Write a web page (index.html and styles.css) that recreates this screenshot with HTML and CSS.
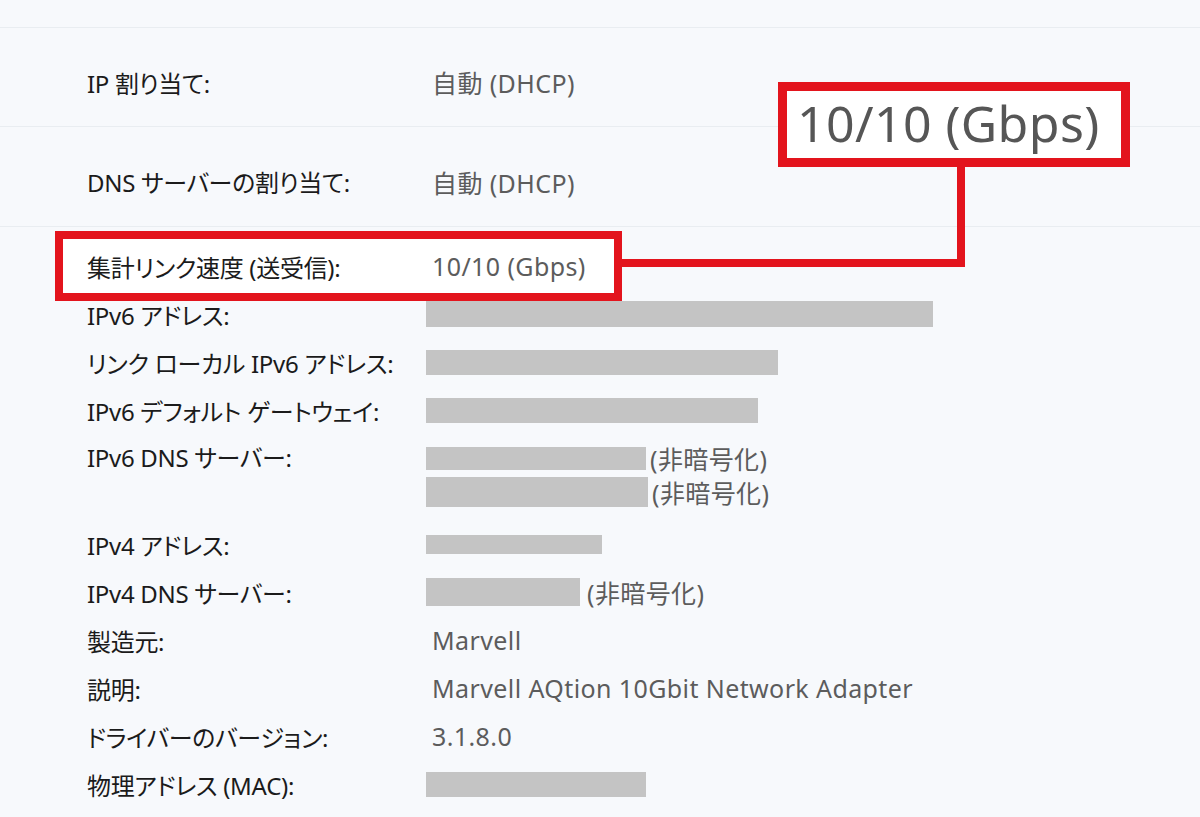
FILE: index.html
```html
<!DOCTYPE html>
<html lang="ja">
<head>
<meta charset="utf-8">
<title>ネットワーク プロパティ</title>
<link rel="stylesheet" href="styles.css">
</head>
<body>
<div class="page">
  <div class="top"></div>
  <div class="row">
    <div class="label">IP 割り当て:</div>
    <div class="value">自動 (DHCP)</div>
  </div>
  <div class="row">
    <div class="label">DNS サーバーの割り当て:</div>
    <div class="value">自動 (DHCP)</div>
  </div>
  <div class="list">
    <div class="item">
      <div class="label">集計リンク速度 (送受信):</div>
      <div class="value">10/10 (Gbps)</div>
    </div>
    <div class="item">
      <div class="label">IPv6 アドレス:</div>
      <div class="value"><span class="mask" style="width:507px;height:26px"></span></div>
    </div>
    <div class="item">
      <div class="label">リンク ローカル IPv6 アドレス:</div>
      <div class="value"><span class="mask" style="width:352px;height:25px"></span></div>
    </div>
    <div class="item">
      <div class="label">IPv6 デフォルト ゲートウェイ:</div>
      <div class="value"><span class="mask" style="width:332px;height:25px"></span></div>
    </div>
    <div class="item multi">
      <div class="label">IPv6 DNS サーバー:</div>
      <div class="value stack">
        <div class="line first"><span class="mask" style="width:220px;height:23px"></span><span class="note">(非暗号化)</span></div>
        <div class="line second"><span class="mask" style="width:222px;height:30px"></span><span class="note">(非暗号化)</span></div>
      </div>
    </div>
    <div class="item">
      <div class="label">IPv4 アドレス:</div>
      <div class="value"><span class="mask" style="width:176px;height:19px"></span></div>
    </div>
    <div class="item">
      <div class="label">IPv4 DNS サーバー:</div>
      <div class="value"><span class="mask" style="width:154px;height:28px"></span><span class="note wide">(非暗号化)</span></div>
    </div>
    <div class="item">
      <div class="label">製造元:</div>
      <div class="value">Marvell</div>
    </div>
    <div class="item">
      <div class="label">説明:</div>
      <div class="value">Marvell AQtion 10Gbit Network Adapter</div>
    </div>
    <div class="item">
      <div class="label">ドライバーのバージョン:</div>
      <div class="value">3.1.8.0</div>
    </div>
    <div class="item">
      <div class="label">物理アドレス (MAC):</div>
      <div class="value"><span class="mask" style="width:220px;height:25px"></span></div>
    </div>
  </div>

  <div class="hl-box"></div>
  <div class="connector"></div>
  <div class="callout">10/10 (Gbps)</div>
</div>
</body>
</html>
```

FILE: styles.css
```css
html, body {
  margin: 0;
  padding: 0;
}
body {
  background: #f7f9fc;
  font-family: "Noto Sans", "Noto Sans CJK JP", sans-serif;
  font-feature-settings: "palt" 1;
  font-size: 24px;
  color: #1b1b1b;
}
.page {
  position: relative;
  z-index: 0;
  width: 1200px;
  height: 817px;
  overflow: hidden;
  background: #f7f9fc;
}
.top {
  height: 27px;
  border-bottom: 1px solid #e9edf1;
}
.row {
  display: grid;
  grid-template-columns: 340px 1fr;
  align-items: center;
  height: 99px;
  padding-left: 87px;
  padding-top: 10px;
  box-sizing: border-box;
  border-bottom: 1px solid #e9edf1;
}
.row + .row { height: 100px; }
.list {
  padding-top: 15px;
}
.item {
  display: grid;
  grid-template-columns: 340px 1fr;
  align-items: center;
  height: 48px;
  padding-left: 87px;
}
.item.multi {
  height: 86px;
  align-items: start;
}
.item.multi .label {
  line-height: 48px;
}
.label {
  color: #1b1b1b;
  white-space: nowrap;
  letter-spacing: -0.3px;
}
.value {
  color: #5c5c5c;
  white-space: nowrap;
  display: flex;
  align-items: center;
  font-size: 25px;
  letter-spacing: 0.4px;
  padding-left: 5px;
}
.stack {
  flex-direction: column;
  align-items: flex-start;
}
.line {
  display: flex;
  align-items: center;
}
.line.first { height: 48px; }
.line.second { height: 28px; margin-top: -4px; }
.mask {
  display: inline-block;
  background: #c4c4c4;
  margin-left: -6px;
}
.note {
  margin-left: 4px;
  color: #5c5c5c;
}
.note.wide { margin-left: 7px; }

.hl-box {
  position: absolute;
  z-index: -1;
  left: 55px;
  top: 231px;
  width: 567px;
  height: 70px;
  box-sizing: border-box;
  border: 8px solid #e3141d;
  background: #ffffff;
}
.connector {
  position: absolute;
  left: 618px;
  top: 162px;
  width: 347px;
  height: 105px;
  box-sizing: border-box;
  border-right: 8px solid #e3141d;
  border-bottom: 8px solid #e3141d;
}
.callout {
  position: absolute;
  left: 778px;
  top: 82px;
  width: 352px;
  height: 85px;
  box-sizing: border-box;
  border: 9px solid #e3141d;
  background: #ffffff;
  color: #565656;
  font-size: 50px;
  letter-spacing: 0.4px;
  line-height: 64px;
  padding-left: 10px;
  white-space: nowrap;
}
```
